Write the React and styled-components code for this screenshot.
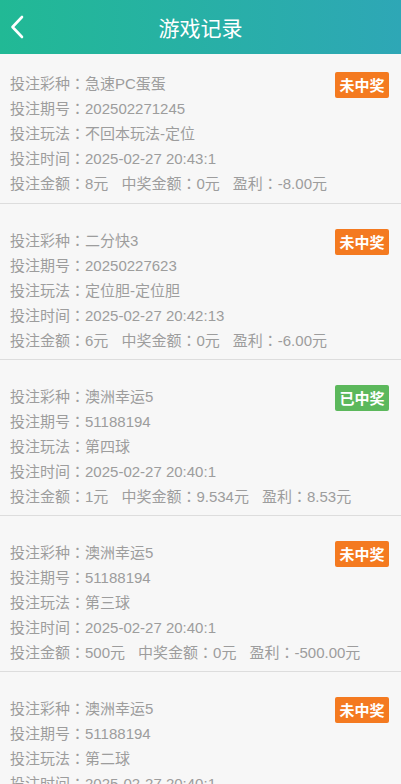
import React from "react";
import styled, { createGlobalStyle, css } from "styled-components";

const GlobalStyle = createGlobalStyle`
  html, body {
    margin: 0;
    padding: 0;
    background: #f7f7f7;
  }
  body {
    font-family: "Liberation Sans", "Noto Sans CJK SC", sans-serif;
  }
`;

const records = [
  {
    kind: "急速PC蛋蛋",
    issue: "202502271245",
    play: "不回本玩法-定位",
    time: "2025-02-27 20:43:1",
    amount: "8元",
    prize: "0元",
    profit: "-8.00元",
    won: false,
  },
  {
    kind: "二分快3",
    issue: "20250227623",
    play: "定位胆-定位胆",
    time: "2025-02-27 20:42:13",
    amount: "6元",
    prize: "0元",
    profit: "-6.00元",
    won: false,
  },
  {
    kind: "澳洲幸运5",
    issue: "51188194",
    play: "第四球",
    time: "2025-02-27 20:40:1",
    amount: "1元",
    prize: "9.534元",
    profit: "8.53元",
    won: true,
  },
  {
    kind: "澳洲幸运5",
    issue: "51188194",
    play: "第三球",
    time: "2025-02-27 20:40:1",
    amount: "500元",
    prize: "0元",
    profit: "-500.00元",
    won: false,
  },
  {
    kind: "澳洲幸运5",
    issue: "51188194",
    play: "第二球",
    time: "2025-02-27 20:40:1",
    amount: "1元",
    prize: "0元",
    profit: "-1.00元",
    won: false,
  },
];

// label + centred full-width colon
const Field = ({ label, children }) => (
  <>
    {label}
    <Colon>：</Colon>
    {children}
  </>
);

const App = () => {
  return (
    <Page>
      <GlobalStyle />
      <Header>
        <BackBtn>
          <svg width="14" height="24" viewBox="0 0 14 24">
            <path
              d="M12 2 L2.5 12 L12 22"
              fill="none"
              stroke="#fff"
              strokeWidth="2.6"
              strokeLinecap="round"
              strokeLinejoin="round"
            />
          </svg>
        </BackBtn>
        <Title>游戏记录</Title>
      </Header>
      <List>
        {records.map((r, i) => (
          <Card key={i} first={i === 0}>
            <Info>
              <Line>
                <Field label="投注彩种">{r.kind}</Field>
              </Line>
              <Line>
                <Field label="投注期号">{r.issue}</Field>
              </Line>
              <Line>
                <Field label="投注玩法">{r.play}</Field>
              </Line>
              <Line>
                <Field label="投注时间">{r.time}</Field>
              </Line>
              <Line>
                <Part>
                  <Field label="投注金额">{r.amount}</Field>
                </Part>
                <Part>
                  <Field label="中奖金额">{r.prize}</Field>
                </Part>
                <Part>
                  <Field label="盈利">{r.profit}</Field>
                </Part>
              </Line>
            </Info>
            <Badge won={r.won}>{r.won ? "已中奖" : "未中奖"}</Badge>
          </Card>
        ))}
      </List>
    </Page>
  );
};

const Page = styled.div`
  width: 401px;
  height: 784px;
  overflow: hidden;
  background: #f7f7f7;
`;

const Header = styled.div`
  position: relative;
  height: 54px;
  display: flex;
  align-items: center;
  justify-content: center;
  background: linear-gradient(90deg, #21b995 0%, #2ea7b6 100%);
`;

const BackBtn = styled.div`
  position: absolute;
  left: 10px;
  top: 15px;
  width: 14px;
  height: 24px;
  display: flex;
`;

const Title = styled.h1`
  margin: 0;
  color: #fff;
  font-size: 21px;
  font-weight: normal;
  font-family: "Noto Sans CJK SC", sans-serif;
  line-height: 54px;
`;

const List = styled.div`
  display: flex;
  flex-direction: column;
`;

const Card = styled.div`
  display: flex;
  justify-content: space-between;
  align-items: flex-start;
  padding: 23px 12px 7px 10px;
  border-bottom: 1px solid #dddddd;
  ${(props) =>
    props.first &&
    css`
      padding-top: 16px;
      padding-bottom: 8px;
    `}
`;

const Info = styled.div`
  display: flex;
  flex-direction: column;
  min-width: 0;
`;

const Line = styled.div`
  font-size: 15px;
  line-height: 25px;
  height: 25px;
  color: #9d9d9d;
  white-space: nowrap;
`;

const Colon = styled.span`
  font-family: "Noto Sans CJK TC", sans-serif;
`;

const Part = styled.span`
  margin-right: 13px;
`;

const Badge = styled.div`
  flex-shrink: 0;
  margin-top: 2px;
  width: 54px;
  height: 26px;
  border-radius: 2px;
  color: #fff;
  font-size: 15px;
  font-weight: bold;
  line-height: 26px;
  text-align: center;
  font-family: "Noto Sans CJK SC", sans-serif;
  background: ${(props) => (props.won ? "#5cb85c" : "#f47a20")};
`;

export default App;
